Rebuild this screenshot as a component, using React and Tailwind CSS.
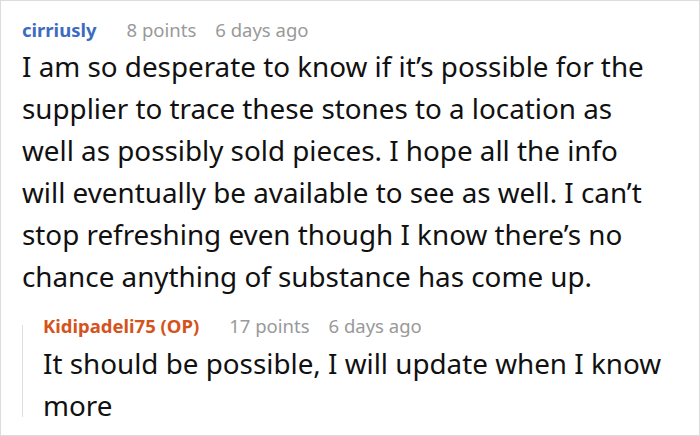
import React from "react";

const body = "I am so desperate to know if it’s possible for the supplier to trace these stones to a location as well as possibly sold pieces. I hope all the info will eventually be available to see as well. I can’t stop refreshing even though I know there’s no chance anything of substance has come up.";

const Meta = ({ name, color, points, ago }) => (
  <div className="flex items-baseline text-[18.5px] leading-[24px]">
    <span className={`font-bold ${color}`}>{name}</span>
    <span className="ml-[30px] text-[#999999]">{points}</span>
    <span className="ml-[19px] text-[#999999]">{ago}</span>
  </div>
);

const App = () => {
  return (
    <div
      className="h-[436px] w-[700px] overflow-hidden border border-[#dcdcdc] bg-white text-[#111111]"
      style={{ fontFamily: '"Noto Sans", "Open Sans", sans-serif' }}
    >
      <div className="pl-[21px] pr-[10px] pt-[17px]">
        <Meta name="cirriusly" color="text-[#3d6cbf]" points="8 points" ago="6 days ago" />
        <p className="mt-[3px] pr-[34px] text-[27.8px] leading-[42px]">{body}</p>

        <div className="mt-[17px] flex">
          <div className="mt-[11px] mb-[9px] w-px shrink-0 bg-[#dedede]" />
          <div className="pl-[20px]">
            <Meta name="Kidipadeli75 (OP)" color="text-[#d4531c]" points="17 points" ago="6 days ago" />
            <p className="mt-[4px] text-[27.8px] leading-[42px]">It should be possible, I will update when I know more</p>
          </div>
        </div>
      </div>
    </div>
  );
};

export default App;
